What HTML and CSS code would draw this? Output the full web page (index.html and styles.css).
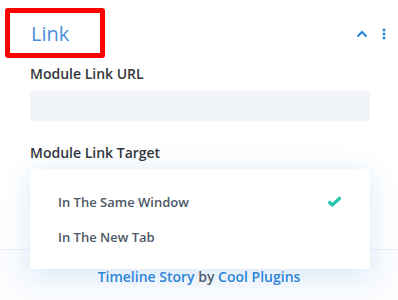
FILE: index.html
```html
<!DOCTYPE html>
<html>
<head>
    <meta charset="utf-8">
    <title>Link</title>
    <link rel="stylesheet" href="styles.css">
</head>
<body>
    <div class="panel">
        <div class="head">
            <div class="title-box"><span class="title">Link</span></div>
            <div class="head-icons">
                <svg width="12" height="8" viewBox="0 0 12 8"><path d="M1.5 6.5 L6 2 L10.5 6.5" fill="none" stroke="#2b87da" stroke-width="2.2"/></svg>
                <svg width="4" height="12" viewBox="0 0 4 12"><circle cx="2" cy="2" r="1.5" fill="#2b87da"/><circle cx="2" cy="6" r="1.5" fill="#2b87da"/><circle cx="2" cy="10" r="1.5" fill="#2b87da"/></svg>
            </div>
        </div>
        <div class="field">
            <div class="label">Module Link URL</div>
            <div class="input"></div>
        </div>
        <div class="field">
            <div class="label">Module Link Target</div>
        </div>
        <div class="footer">
            <a class="blue">Timeline Story</a> by <a class="blue">Cool Plugins</a>
        </div>
        <div class="dropdown">
            <div class="option">In The Same Window
                <svg width="15" height="11" viewBox="0 0 15 11"><path d="M1.5 5.5 L5.3 9 L13.5 1.5" fill="none" stroke="#29c4a9" stroke-width="3.2"/></svg>
            </div>
            <div class="option">In The New Tab</div>
        </div>
    </div>
</body>
</html>
```

FILE: styles.css
```css
body{
    margin: 0;
    background-color: #fff;
    font-family: "Open Sans", sans-serif;
}
.panel{
    position: relative;
    width: 398px;
    height: 300px;
    overflow: hidden;
}
.head{
    display: flex;
    justify-content: space-between;
    align-items: center;
    padding: 8px 12px 0 5px;
}
.title-box{
    width: 90px;
    height: 40px;
    border: 5px solid #f00;
    border-radius: 3px;
    display: flex;
    align-items: center;
}
.title{
    margin-left: 21px;
    font-size: 20px;
    color: #4a8fd9;
}
.head-icons{
    display: flex;
    align-items: center;
    gap: 14px;
    margin-top: 2px;
}
.field{
    padding: 0 28px 0 30px;
}
.label{
    margin-top: 6px;
    font-size: 14px;
    font-weight: 600;
    color: #32373c;
    line-height: 20px;
}
.input{
    margin-top: 7px;
    height: 30px;
    background-color: #f1f4f8;
    border-radius: 3px;
    margin-bottom: 22px;
}
.footer{
    position: absolute;
    left: 0;
    right: 0;
    top: 249px;
    bottom: 0;
    border-top: 1px solid #eef1f5;
    background-color: #fbfcfe;
    text-align: center;
    font-size: 14px;
    font-weight: 600;
    color: #555d66;
    line-height: 54px;
}
.blue{
    color: #2e85d8;
}
.dropdown{
    position: absolute;
    left: 30px;
    top: 169px;
    width: 340px;
    height: 100px;
    box-sizing: border-box;
    padding: 15px 28px 0 28px;
    background-color: #fff;
    border-radius: 3px;
    box-shadow: 0 5px 30px rgba(43, 135, 218, 0.18);
}
.option{
    display: flex;
    justify-content: space-between;
    align-items: center;
    height: 35px;
    font-size: 13px;
    font-weight: 600;
    color: #4c5866;
}
```
